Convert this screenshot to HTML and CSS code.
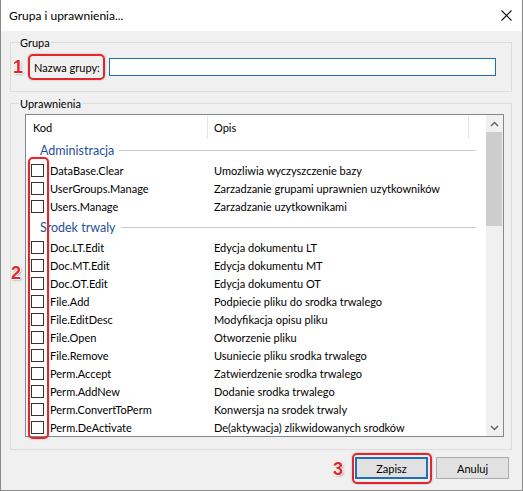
FILE: index.html
```html
<!DOCTYPE html>
<html lang="pl">
<head>
    <meta charset="UTF-8">
    <title>Grupa i uprawnienia...</title>
    <link rel="stylesheet" href="styles.css">
</head>
<body>
    <div class="window">
        <div class="titlebar">
            <span class="title">Grupa i uprawnienia...</span>
            <svg class="close" width="11" height="11" viewBox="0 0 11 11">
                <path d="M0.5 0.5 L10.5 10.5 M10.5 0.5 L0.5 10.5" stroke="#111" stroke-width="1.1" fill="none"/>
            </svg>
        </div>

        <div class="body">
            <fieldset class="box box-group">
                <legend>Grupa</legend>
                <div class="name-row">
                    <label for="group_name">Nazwa grupy:</label>
                    <input type="text" id="group_name" name="group_name">
                </div>
            </fieldset>

            <fieldset class="box box-perms">
                <legend>Uprawnienia</legend>
                <div class="listview">
                    <div class="list">
                        <div class="list-head">
                            <div class="hcol hcol-code">Kod</div>
                            <div class="hcol hcol-desc">Opis</div>
                        </div>

                        <div class="grp">
                            <div class="grp-head"><span>Administracja</span></div>
                            <div class="row"><div class="c-code"><span class="chk"></span>DataBase.Clear</div><div class="c-desc">Umozliwia wyczyszczenie bazy</div></div>
                            <div class="row"><div class="c-code"><span class="chk"></span>UserGroups.Manage</div><div class="c-desc">Zarzadzanie grupami uprawnien uzytkowników</div></div>
                            <div class="row"><div class="c-code"><span class="chk"></span>Users.Manage</div><div class="c-desc">Zarzadzanie uzytkownikami</div></div>
                        </div>

                        <div class="grp">
                            <div class="grp-head"><span>Srodek trwaly</span></div>
                            <div class="row"><div class="c-code"><span class="chk"></span>Doc.LT.Edit</div><div class="c-desc">Edycja dokumentu LT</div></div>
                            <div class="row"><div class="c-code"><span class="chk"></span>Doc.MT.Edit</div><div class="c-desc">Edycja dokumentu MT</div></div>
                            <div class="row"><div class="c-code"><span class="chk"></span>Doc.OT.Edit</div><div class="c-desc">Edycja dokumentu OT</div></div>
                            <div class="row"><div class="c-code"><span class="chk"></span>File.Add</div><div class="c-desc">Podpiecie pliku do srodka trwalego</div></div>
                            <div class="row"><div class="c-code"><span class="chk"></span>File.EditDesc</div><div class="c-desc">Modyfikacja opisu pliku</div></div>
                            <div class="row"><div class="c-code"><span class="chk"></span>File.Open</div><div class="c-desc">Otworzenie pliku</div></div>
                            <div class="row"><div class="c-code"><span class="chk"></span>File.Remove</div><div class="c-desc">Usuniecie pliku srodka trwalego</div></div>
                            <div class="row"><div class="c-code"><span class="chk"></span>Perm.Accept</div><div class="c-desc">Zatwierdzenie srodka trwalego</div></div>
                            <div class="row"><div class="c-code"><span class="chk"></span>Perm.AddNew</div><div class="c-desc">Dodanie srodka trwalego</div></div>
                            <div class="row"><div class="c-code"><span class="chk"></span>Perm.ConvertToPerm</div><div class="c-desc">Konwersja na srodek trwaly</div></div>
                            <div class="row"><div class="c-code"><span class="chk"></span>Perm.DeActivate</div><div class="c-desc">De(aktywacja) zlikwidowanych srodków</div></div>
                        </div>
                    </div>

                    <div class="vscroll">
                        <div class="sb-btn">
                            <svg width="9" height="6" viewBox="0 0 9 6"><path d="M1 5 L4.5 1.5 L8 5" stroke="#606060" stroke-width="1.4" fill="none"/></svg>
                        </div>
                        <div class="sb-track"><div class="sb-thumb"></div></div>
                        <div class="sb-btn">
                            <svg width="9" height="6" viewBox="0 0 9 6"><path d="M1 1 L4.5 4.5 L8 1" stroke="#606060" stroke-width="1.4" fill="none"/></svg>
                        </div>
                    </div>
                </div>
            </fieldset>

            <div class="buttons">
                <button type="submit" class="btn btn-default">Zapisz</button>
                <button type="button" class="btn">Anuluj</button>
            </div>
        </div>

        <!-- czerwone oznaczenia -->
        <div class="callout callout-1"></div>
        <div class="callout callout-2"></div>
        <div class="callout callout-3"></div>
        <span class="num num-1">1</span>
        <span class="num num-2">2</span>
        <span class="num num-3">3</span>
    </div>
</body>
</html>
```

FILE: styles.css
```css
body {
    margin: 0;
    font-family: Lato, "Liberation Sans", Arial, sans-serif;
    font-size: 11px;
    color: #000;
}
.window {
    position: relative;
    width: 523px;
    height: 491px;
    box-sizing: border-box;
    background-color: #f0f0f0;
    border: 1px solid #8a8a8a;
    border-top: none;
}
.titlebar {
    height: 31px;
    background-color: #fff;
    display: flex;
    align-items: center;
    justify-content: space-between;
    padding: 0 10px 0 8px;
}
.title {
    font-size: 12px;
}
.body {
    padding: 4px 10px 0 9px;
}
.box {
    margin: 0;
    border: 1px solid #dcdcdc;
    padding: 8px 8px 15px 8px;
}
.box legend {
    padding: 0 1px;
    line-height: 15px;
}
.box-perms {
    margin-top: 4px;
    padding: 3px 7px 12px 8px;
}
.name-row {
    display: flex;
    align-items: center;
    height: 18px;
    margin: 0 7px 0 15px;
}
.name-row label {
    width: 75px;
    flex-shrink: 0;
}
.name-row input {
    flex: 1;
    height: 18px;
    box-sizing: border-box;
    border: 1px solid #1f6fb6;
    background: #fff;
    padding: 0 3px;
    outline: none;
}
.listview {
    margin-left: 6px;
    height: 323px;
    box-sizing: border-box;
    border: 1px solid #828790;
    background-color: #fff;
    display: flex;
}
.list {
    flex: 1;
    overflow: hidden;
}
.list-head {
    display: flex;
    height: 25px;
}
.hcol {
    display: flex;
    align-items: center;
    border-right: 1px solid #e5e5e5;
    margin: 1px 0;
}
.hcol-code {
    width: 174px;
    padding-left: 7px;
}
.hcol-desc {
    width: 254px;
    padding-left: 6px;
}
.grp + .grp {
    margin-top: 2px;
}
.grp-head {
    display: flex;
    align-items: center;
    height: 21px;
    padding-left: 14px;
    padding-right: 10px;
    color: #1f4fa2;
    font-size: 12.5px;
}
.grp-head::after {
    content: "";
    flex: 1;
    height: 1px;
    margin-left: 5px;
    background-color: #bfcad8;
}
.row {
    display: flex;
    align-items: center;
    height: 18px;
    white-space: nowrap;
}
.c-code {
    width: 181px;
    display: flex;
    align-items: center;
}
.c-desc {
    padding-left: 7px;
}
.chk {
    width: 13px;
    height: 13px;
    box-sizing: border-box;
    border: 1px solid #333;
    background: #fff;
    margin: 0 6px 0 5px;
}
.vscroll {
    width: 17px;
    background-color: #f0f0f0;
    display: flex;
    flex-direction: column;
}
.sb-btn {
    height: 17px;
    display: flex;
    align-items: center;
    justify-content: center;
}
.sb-track {
    flex: 1;
}
.sb-thumb {
    height: 94px;
    margin: 0 1px 0 0;
    background-color: #cdcdcd;
}
.buttons {
    display: flex;
    justify-content: flex-end;
    gap: 8px;
    margin-top: 7px;
    padding-right: 3px;
}
.btn {
    width: 73px;
    height: 22px;
    font-family: inherit;
    font-size: 11px;
    background-color: #e1e1e1;
    border: 1px solid #adadad;
    padding: 0;
}
.btn-default {
    border-color: #1f6fb6;
    box-shadow: inset 0 0 0 1px #1f6fb6;
}
.callout {
    position: absolute;
    border: 2px solid #e2262b;
    border-radius: 5px;
    box-shadow: 0 0 2px rgba(0, 0, 0, 0.35);
}
.callout-1 {
    left: 27px;
    top: 54px;
    width: 73px;
    height: 22px;
}
.callout-2 {
    left: 27px;
    top: 157px;
    width: 17px;
    height: 278px;
}
.callout-3 {
    left: 351px;
    top: 453px;
    width: 76px;
    height: 27px;
}
.num {
    position: absolute;
    font-family: "Liberation Sans", Arial, sans-serif;
    font-weight: bold;
    font-size: 18px;
    line-height: 20px;
    color: #e2262b;
    text-shadow: -1px 0 #fff, 1px 0 #fff, 0 -1px #fff, 0 1px #fff, 1px 1px 2px rgba(0, 0, 0, 0.5);
}
.num-1 {
    left: 12px;
    top: 57px;
}
.num-2 {
    left: 10px;
    top: 263px;
}
.num-3 {
    left: 332px;
    top: 459px;
}
```
